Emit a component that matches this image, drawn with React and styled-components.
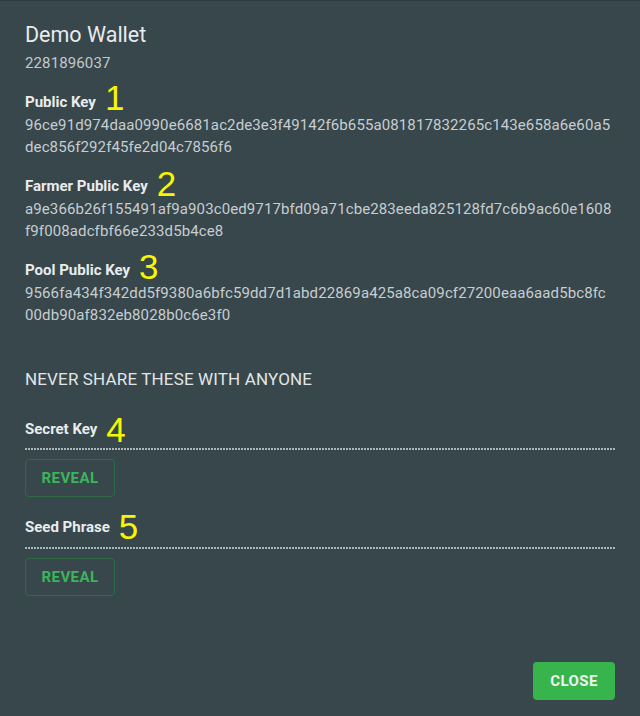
import React from "react";
import styled, { createGlobalStyle } from "styled-components";

const Global = createGlobalStyle`
  html, body { margin: 0; padding: 0; background: #37474c; }
  body { font-family: Roboto, "Liberation Sans", Arial, sans-serif; -webkit-font-smoothing: antialiased; }
  * { box-sizing: border-box; }
`;

const Dialog = styled.div`
  height: 716px;
  display: flex;
  flex-direction: column;
  padding: 20px 25px 16px 25px;
  background: #37474c;
  border-top: 1px solid #2d3b3f;
  color: #e6e9ea;
`;

const Title = styled.h2`
  margin: 0;
  font-size: 21.5px;
  line-height: 28px;
  font-weight: 400;
  color: #e8ebec;
`;

const SubId = styled.div`
  margin-top: 3px;
  font-size: 15px;
  line-height: 22px;
  color: #c3c9cb;
  letter-spacing: 0.12px;
`;

const Section = styled.section`
  margin-top: ${(p) => p.$gap}px;
`;

const LabelRow = styled.div`
  display: flex;
  align-items: flex-start;
  height: 22px;
`;

const Label = styled.span`
  font-size: 15px;
  line-height: 22px;
  font-weight: 700;
  color: #e9ecee;
`;

/* annotation digit drawn over the dialog; its line box is 22px so the
   baseline sits ~7px below the label's baseline before the drop offset */
const Mark = styled.span`
  font-family: "Liberation Sans", Arial, sans-serif;
  font-size: 35px;
  line-height: 22px;
  color: #f6f600;
  margin-left: 9px;
  transform: translateY(${(p) => p.$drop - 7}px);
`;

const KeyText = styled.div`
  margin-top: 1px;
  margin-right: 1px;
  font-size: 15px;
  line-height: 22px;
  letter-spacing: 0.11px;
  color: #c8cdd0;
  word-break: break-all;
`;

const Warning = styled.div`
  margin-top: 41px;
  font-size: 17px;
  line-height: 24px;
  color: #e2e5e6;
  text-transform: uppercase;
  letter-spacing: 0.15px;
`;

const Dots = styled.div`
  margin-top: ${(p) => p.$gap}px;
  height: 2px;
  background-image: repeating-linear-gradient(
    to right,
    #aab6bb 0,
    #aab6bb 2px,
    transparent 2px,
    transparent 3px
  );
`;

const OutlineButton = styled.button`
  margin-top: 9px;
  height: 38px;
  width: 90px;
  padding: 0;
  background: transparent;
  border: 1px solid #2f6a47;
  border-radius: 4px;
  color: #3cb55a;
  font-family: Roboto, "Liberation Sans", Arial, sans-serif;
  font-size: 15px;
  font-weight: 700;
  letter-spacing: 0.4px;
  text-transform: uppercase;
  cursor: pointer;
`;

const Footer = styled.div`
  margin-top: auto;
  display: flex;
  justify-content: flex-end;
`;

const CloseButton = styled.button`
  height: 38px;
  width: 82px;
  padding: 0;
  border: none;
  border-radius: 4px;
  background: #38b44c;
  color: #eaf6ec;
  font-family: Roboto, "Liberation Sans", Arial, sans-serif;
  font-size: 15px;
  font-weight: 700;
  letter-spacing: 0.4px;
  text-transform: uppercase;
  cursor: pointer;
`;

const keys = [
  {
    label: "Public Key",
    mark: "1",
    drop: 3,
    gap: 17,
    value:
      "96ce91d974daa0990e6681ac2de3e3f49142f6b655a081817832265c143e658a6e60a5dec856f292f45fe2d04c7856f6",
  },
  {
    label: "Farmer Public Key",
    mark: "2",
    drop: 5,
    gap: 17,
    value:
      "a9e366b26f155491af9a903c0ed9717bfd09a71cbe283eeda825128fd7c6b9ac60e1608f9f008adcfbf66e233d5b4ce8",
  },
  {
    label: "Pool Public Key",
    mark: "3",
    drop: 4,
    gap: 17,
    value:
      "9566fa434f342dd5f9380a6bfc59dd7d1abd22869a425a8ca09cf27200eaa6aad5bc8fc00db90af832eb8028b0c6e3f0",
  },
];

const secrets = [
  { label: "Secret Key", mark: "4", drop: 8, gap: 27, dots: 8 },
  { label: "Seed Phrase", mark: "5", drop: 7, gap: 19, dots: 9 },
];

export default function App() {
  return (
    <>
      <Global />
      <Dialog>
        <Title>Demo Wallet</Title>
        <SubId>2281896037</SubId>
        {keys.map((k) => (
          <Section key={k.label} $gap={k.gap}>
            <LabelRow>
              <Label>{k.label}</Label>
              <Mark $drop={k.drop}>{k.mark}</Mark>
            </LabelRow>
            <KeyText>{k.value}</KeyText>
          </Section>
        ))}
        <Warning>Never share these with anyone</Warning>
        {secrets.map((s) => (
          <Section key={s.label} $gap={s.gap}>
            <LabelRow>
              <Label>{s.label}</Label>
              <Mark $drop={s.drop}>{s.mark}</Mark>
            </LabelRow>
            <Dots $gap={s.dots} />
            <OutlineButton>Reveal</OutlineButton>
          </Section>
        ))}
        <Footer>
          <CloseButton>Close</CloseButton>
        </Footer>
      </Dialog>
    </>
  );
}
